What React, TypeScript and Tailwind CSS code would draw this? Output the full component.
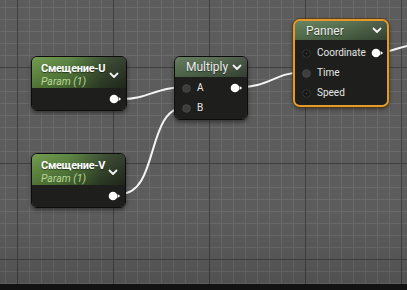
import React from 'react';

const FONT = { fontFamily: 'Roboto, "Noto Sans", sans-serif' };

const W = 407;
const H = 284;

// grid lines: minor every 12px, major every 96px
const minorX = Array.from({ length: 35 }, (_, i) => 5 + i * 12);
const minorY = Array.from({ length: 24 }, (_, i) => 7 + i * 12);
const majorX = [17, 113, 209, 305, 401];
const majorY = [67, 163, 259];

const Grid = () => (
  <svg className="absolute inset-0" width={W} height={H}>
    <rect width={W} height={H} fill="#5c5c5c" />
    {minorX.map((x) => (
      <line key={'vx' + x} x1={x + 0.5} y1={0} x2={x + 0.5} y2={H} stroke="#6a6a6a" strokeWidth={1} />
    ))}
    {minorY.map((y) => (
      <line key={'hy' + y} x1={0} y1={y + 0.5} x2={W} y2={y + 0.5} stroke="#6a6a6a" strokeWidth={1} />
    ))}
    {majorX.map((x) => (
      <line key={'mx' + x} x1={x + 0.5} y1={0} x2={x + 0.5} y2={H} stroke="#404040" strokeWidth={1} />
    ))}
    {majorY.map((y) => (
      <line key={'my' + y} x1={0} y1={y + 0.5} x2={W} y2={y + 0.5} stroke="#404040" strokeWidth={1} />
    ))}
    <defs>
      <linearGradient id="vig" x1="0" y1="0" x2="0" y2="1">
        <stop offset="0.75" stopColor="#000" stopOpacity="0" />
        <stop offset="1" stopColor="#000" stopOpacity="0.12" />
      </linearGradient>
    </defs>
    <rect width={W} height={H} fill="url(#vig)" />
  </svg>
);

const Wires = () => (
  <svg className="absolute inset-0" width={W} height={H} fill="none">
    <g stroke="#f4f4f4" strokeWidth={2} strokeLinecap="round">
      <path d="M121 99 C150 99, 155 87, 186 87" />
      <path d="M120 194 C160 194, 145 107, 186 107" />
      <path d="M240 87 C270 87, 275 72, 306 72" />
      <path d="M380 52 C392 52, 398 47, 412 45" />
    </g>
  </svg>
);

const Chevron = () => (
  <svg width="10" height="7" viewBox="0 0 10 7" className="shrink-0">
    <path d="M1.5 1.5 L5 5 L8.5 1.5" stroke="#f2f2f2" strokeWidth={1.8} fill="none" strokeLinecap="round" strokeLinejoin="round" />
  </svg>
);

const OutPin = () => (
  <svg width="13" height="10" viewBox="0 0 13 10" className="shrink-0">
    <circle cx="5" cy="5" r="4.3" fill="#ffffff" />
    <path d="M9.6 3 L12.2 5 L9.6 7 Z" fill="#ffffff" />
  </svg>
);

const InPin = ({ linked }: { linked?: boolean }) => (
  <svg width="9" height="9" viewBox="0 0 9 9" className="shrink-0">
    <circle cx="4.5" cy="4.5" r="3.8" fill={linked ? '#3d3e3c' : '#141514'} stroke={linked ? '#4a4b48' : '#353633'} strokeWidth={1} />
    {!linked && <circle cx="4.5" cy="4.5" r="1" fill="#3a3b38" />}
  </svg>
);

const ParamNode = ({ title, sub, className }: { title: string; sub: string; className: string }) => (
  <div className={`absolute rounded-[6px] border border-[#0c0c0c] overflow-hidden shadow-[0_2px_4px_rgba(0,0,0,0.45)] ${className}`}>
    <div className="h-[31px] pl-[9px] pr-[7px] pt-[5px] flex justify-between bg-[linear-gradient(to_bottom,rgba(255,255,255,0.06),rgba(0,0,0,0.22)),linear-gradient(100deg,#6b9744_0%,#55813a_38%,#33452a_75%,#283022_100%)]">
      <div className="flex flex-col">
        <span className="whitespace-nowrap text-[11px] font-bold leading-[13px] tracking-[-0.3px] text-white [text-shadow:0_1px_1px_rgba(0,0,0,0.5)]">{title}</span>
        <span className="whitespace-nowrap text-[10.5px] italic leading-[12px] mt-[1px] text-[#b9d79a]">{sub}</span>
      </div>
      <div className="pt-[10px]">
        <Chevron />
      </div>
    </div>
    <div className="h-[22px] bg-[#1e1f1d] flex items-center justify-end pr-[4px]">
      <OutPin />
    </div>
  </div>
);

const Row = ({ label, linked }: { label: string; linked?: boolean }) => (
  <div className="h-[20px] flex items-center gap-[6px]">
    <InPin linked={linked} />
    <span className="whitespace-nowrap text-[10px] leading-none text-[#e6e6e6]">{label}</span>
  </div>
);

const MultiplyNode = () => (
  <div className="absolute left-[174px] top-[56px] w-[74px] rounded-[6px] border border-[#0c0c0c] overflow-hidden shadow-[0_2px_4px_rgba(0,0,0,0.45)]">
    <div className="h-[20px] pl-[11px] pr-[5px] flex items-center justify-between bg-[linear-gradient(to_bottom,rgba(255,255,255,0.08),rgba(0,0,0,0.15)),linear-gradient(100deg,#5a7455_0%,#4c6348_55%,#3a4738_100%)]">
      <span className="text-[12px] leading-none text-[#ececec] [text-shadow:0_1px_1px_rgba(0,0,0,0.5)]">Multiply</span>
      <Chevron />
    </div>
    <div className="bg-[#1e1f1d] pt-[1px] pb-[1px] pl-[7px] pr-[4px] flex justify-between">
      <div className="flex flex-col">
        <Row label="A" linked />
        <Row label="B" linked />
      </div>
      <div className="h-[20px] flex items-center">
        <OutPin />
      </div>
    </div>
  </div>
);

const PannerNode = () => (
  <div className="absolute left-[293px] top-[19px] w-[96px] rounded-[7px] border-2 border-[#e39a2c] overflow-hidden shadow-[0_0_0_1px_rgba(90,50,0,0.6),0_2px_4px_rgba(0,0,0,0.45)]">
    <div className="h-[19px] pl-[11px] pr-[5px] flex items-center justify-between bg-[linear-gradient(to_bottom,rgba(255,255,255,0.08),rgba(0,0,0,0.15)),linear-gradient(100deg,#5c7a54_0%,#4e6947_55%,#3c4c39_100%)]">
      <span className="text-[12px] leading-none text-[#ececec] [text-shadow:0_1px_1px_rgba(0,0,0,0.5)]">Panner</span>
      <Chevron />
    </div>
    <div className="bg-[#1e1f1d] pt-[3px] pb-[2px] pl-[7px] pr-[3px] flex justify-between">
      <div className="flex flex-col">
        <Row label="Coordinate" />
        <Row label="Time" linked />
        <Row label="Speed" />
      </div>
      <div className="h-[20px] flex items-center">
        <OutPin />
      </div>
    </div>
  </div>
);

export default function App() {
  return (
    <div className="w-[407px] h-[290px] bg-[#121212] flex flex-col overflow-hidden" style={FONT}>
      <div className="relative w-[407px] h-[284px] overflow-hidden">
        <Grid />
        <Wires />
        <ParamNode title="Смещение-U" sub="Param (1)" className="left-[31px] top-[56px] w-[96px]" />
        <ParamNode title="Смещение-V" sub="Param (1)" className="left-[31px] top-[153px] w-[95px]" />
        <MultiplyNode />
        <PannerNode />
      </div>
    </div>
  );
}
